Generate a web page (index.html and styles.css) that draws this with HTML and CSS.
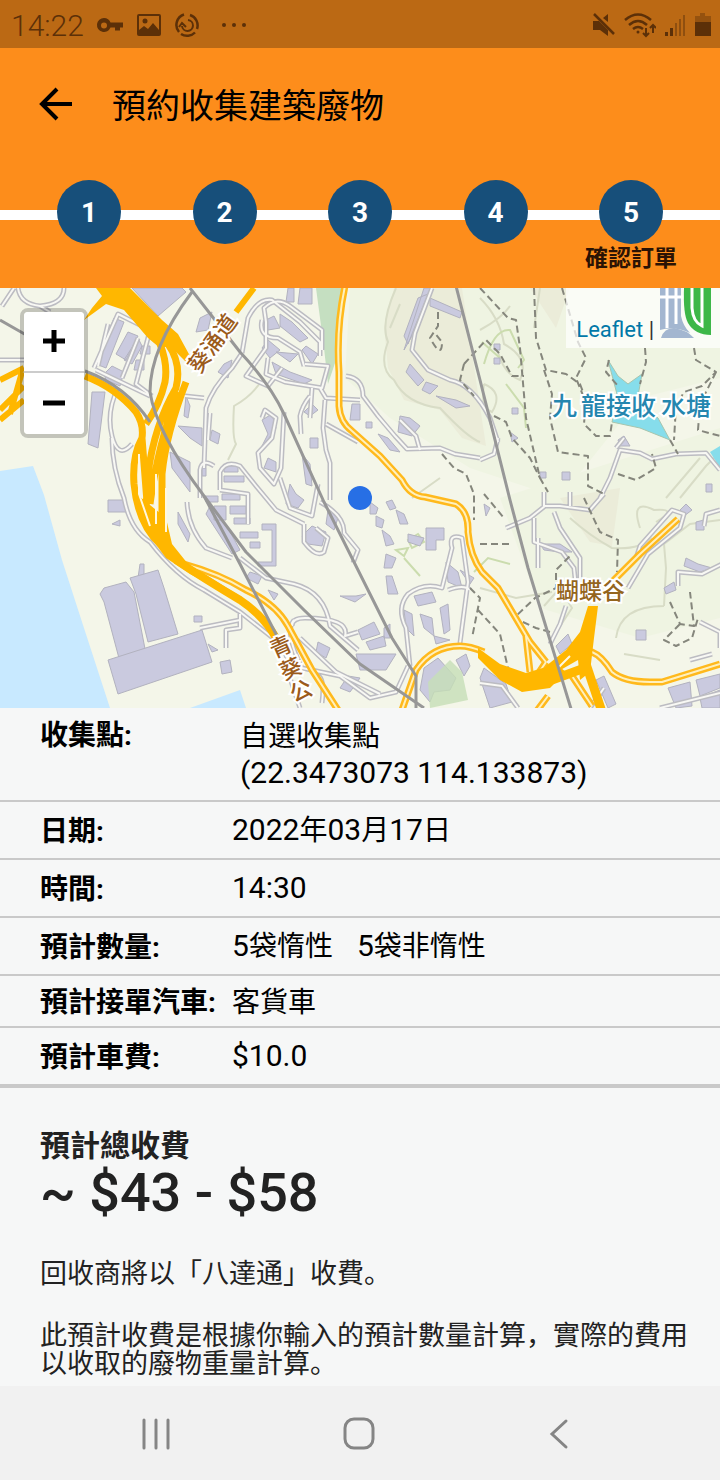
FILE: index.html
```
<!DOCTYPE html>
<html lang="zh">
<head>
  <meta charset="UTF-8">
  <meta name="viewport" content="width=device-width, initial-scale=1.0">
  <title>預約收集建築廢物</title>
  <link rel="stylesheet" href="styles.css">
</head>
<body>
  <!-- Status bar -->
  <div class="status-bar">
    <span class="time">14:22</span>
    <svg width="28" height="28" viewBox="0 0 28 28">
      <path fill="currentColor" fill-rule="evenodd" d="M8 7a7 7 0 1 0 6.500 9.500H19v3h5v-3h3v-5H14.500A7 7 0 0 0 8 7zm0 4.500a3 3 0 1 1 0 6 3 3 0 0 1 0-6z"/>
    </svg>
    <svg width="26" height="26" viewBox="0 0 26 26">
      <rect x="2" y="3" width="22" height="20" rx="1" fill="none" stroke="currentColor" stroke-width="2"/>
      <circle cx="9" cy="9" r="2.500" fill="currentColor"/>
      <path fill="currentColor" d="M3 18l5-4 4 3 5-6 6 7v5H3z"/>
    </svg>
    <svg width="26" height="26" viewBox="0 0 26 26" fill="none" stroke="currentColor" stroke-width="2.500">
      <path d="M10 2.500A11 11 0 0 0 5 20M7 22a11 11 0 0 0 14-1.500M23 17A11 11 0 0 0 16 3"/>
      <path d="M14 8a5.500 5.500 0 1 1-6 6M5 15l3-4 4 4" stroke-width="2"/>
    </svg>
    <svg class="dots" width="28" height="26" viewBox="0 0 28 26" fill="currentColor">
      <circle cx="4" cy="13" r="2"/><circle cx="14" cy="13" r="2"/><circle cx="24" cy="13" r="2"/>
    </svg>
    <div class="status-right">
      <svg width="24" height="26" viewBox="0 0 24 26">
        <path fill="currentColor" d="M1 9h6l9 9v6l-8-6H1z"/>
        <path fill="currentColor" d="M11 6l5-4v8z"/>
        <path stroke="currentColor" stroke-width="2.500" d="M2 2l20 20"/>
      </svg>
      <svg width="32" height="26" viewBox="0 0 32 26" fill="none" stroke="currentColor" stroke-width="2.500">
        <path d="M1 8q13-11 26 0M5 13q9-8 18 0M9 17q5-4 10 0"/>
        <circle cx="14" cy="20" r="1.500" fill="currentColor" stroke="none"/>
        <path stroke-width="2" d="M22 16v8M19 21l3 3 3-3M29 21v-8M26 16l3-3 3 3"/>
      </svg>
      <svg width="22" height="26" viewBox="0 0 22 26" fill="currentColor">
        <path d="M1 20h3v4H1zM6 16h3v8H6z"/>
        <path opacity=".45" d="M11 11h2v13h-2zM15 7h2v17h-2zM19 3h2v21h-2z"/>
      </svg>
      <svg width="18" height="26" viewBox="0 0 18 26" fill="currentColor">
        <path opacity=".4" d="M1 4h5V1h5v3h6v6H1z"/>
        <path d="M1 10h16v14H1z"/>
      </svg>
    </div>
  </div>

  <header class="header">
    <div class="title-row">
      <button class="back" aria-label="返回">
        <svg width="34" height="34" viewBox="0 0 34 34" fill="none" stroke="currentColor" stroke-width="4">
          <path d="M33 17H4M18 2L3 17l15 15"/>
        </svg>
      </button>
      <h1>預約收集建築廢物</h1>
    </div>
    <ol class="steps">
      <li><span class="circle">1</span></li>
      <li><span class="circle">2</span></li>
      <li><span class="circle">3</span></li>
      <li><span class="circle">4</span></li>
      <li aria-current="step"><span class="circle">5</span><span class="step-label">確認訂單</span></li>
    </ol>
  </header>

  <main>
    <div class="map">
      <svg class="map-canvas" viewBox="0 0 720 420" preserveAspectRatio="xMidYMid slice" role="img" aria-label="收集點地圖">
        <defs>
          <g id="streets">
            <path d="M-2 72L24 72M18 0q2 16 22 18q24-2 24-18M2 18L14 0M40 18L50 24"/>
            <path d="M94 80L118 26L150 42L136 96L152 108M108 36L98 78M138 50L122 90M96 82L150 108M118 100Q106 124 112 148Q118 172 132 156M112 150Q112 180 124 210Q130 242 150 254Q176 288 204 302L240 324L278 354L300 420"/>
            <path d="M282 80L268 98L246 88L266 60L266 34L264 20Q276 8 290 18L322 42L322 62"/>
            <path d="M242 65L248 30Q258 10 272 12L300 34L320 54L320 68M262 32Q258 50 278 50L300 64L304 78M268 70L266 86L285 94L322 100L328 78L305 76M320 100L326 110L360 112M325 112L323 140L326 162L330 175L330 212M346 88Q363 90 363 108L378 128L395 148L407 161L440 160L455 166L480 170"/>
            <path d="M310 108Q302 118 300 128L301 146M312 100L310 130M262 130L265 122L276 130L272 150L258 165L260 180L274 196L281 180L284 124M326 136L358 154"/>
            <path d="M242 65L232 80Q212 100 206 120L204 180M204 110L185 108M210 125L208 152M200 210V182Q202 170 214 178M220 202V184Q226 172 240 178L256 198L276 222L304 236M220 202L248 206V236M280 190L290 220L312 228L318 196"/>
            <path d="M187 214Q188 240 206 260L232 270M304 236L304 254Q316 270 324 264L328 250L316 240M320 214Q345 228 344 245L358 262L353 275M240 270L266 290L294 296Q325 304 330 338L358 362M292 338Q292 330 305 330Q350 330 345 348L358 344M294 332Q284 344 302 380L340 388L370 410L396 404L408 378M300 350L336 384L380 406M318 388Q325 390 322 415"/>
            <path d="M410 378L406 340Q396 320 408 306Q424 294 442 300L452 260Q448 245 462 250L468 294L460 355M448 302Q464 296 470 302"/>
            <path d="M432 0L415 45L412 62L428 82L450 92Q472 96 490 130L498 154M400 132L416 148L420 162"/>
            <path d="M480 172L494 166L498 150M600 210L610 190L620 162L640 165L652 171L676 166L706 165L720 182M616 160L624 150"/>
            <path d="M506 240L530 230L545 218L560 218L590 222L604 206M534 230L534 254L562 264L574 280L576 300M554 224L560 240L580 270L580 296M566 318L560 336L550 356M538 250L538 280M544 218L544 204M570 218V204"/>
            <path d="M636 270L640 258L672 222L684 226L680 240L648 266L628 300M704 238L706 226L720 222M678 298L678 284L702 286L722 276M700 334L720 344V360M660 420L720 405M690 372L712 366"/>
            <path d="M240 326L240 340L226 342L226 360M240 332L200 340M480 395L502 398L518 420M590 420L604 400"/>
          </g>
          <g id="roads">
            <path d="M345 -2Q336 40 339 84V118Q340 134 352 143L380 168L402 192Q410 208 425 209L456 216Q469 224 468 244Q470 268 482 284L498 300L530 354L546 374"/>
            <path d="M184 276Q220 286 246 302Q276 316 288 338L312 382L338 422"/>
            <path d="M402 422L416 382Q432 358 460 358Q470 358 484 364"/>
            <path d="M578 364H592Q602 368 612 384Q624 394 650 394H662L720 376"/>
            <path d="M612 294L640 266L678 231M526 348L530 384M548 408L536 424M572 388L592 418M546 374L534 392"/>
          </g>
          <g id="rail">
            <path d="M192 4Q150 60 150 104Q156 144 204 208L246 264L304 322L360 376L424 420"/>
            <path d="M190 0L240 64Q270 96 284 126L324 214L392 350L416 388V422"/>
            <path d="M0 32L28 48M85 83Q126 98 150 134M204 208L240 276L280 354"/>
            <path d="M456 -2L480 92L510 212L528 280L572 424"/>
          </g>
        </defs>

        <!-- land, hills and water -->
        <rect width="720" height="420" fill="#f4f6e9"/>
        <g fill="#eff4e2">
          <path d="M350 0H720V90L640 110L560 210L470 180L390 130L345 90z"/>
          <path d="M500 210L720 140V330L640 350L540 320z"/>
        </g>
        <path fill="#c5dfc1" d="M316 0H346L340 30L336 72L328 96L324 60z"/>
        <g fill="#ebecd9">
          <path d="M394 0L384 38L388 80L404 112L440 122L462 150L486 158L476 92L462 0zM530 0H570L556 40z"/>
          <path d="M560 210L620 200L612 258L590 254z"/>
        </g>
        <g fill="none" stroke="#d8dcc6" stroke-width="2">
          <path d="M396 0Q380 36 388 54Q378 80 394 92Q406 116 440 120Q468 150 480 154M400 16L390 40M570 230Q590 248 612 260Q640 262 652 250M480 300L516 310L552 304M664 318L666 280L664 256L690 236L720 232M664 318Q620 318 616 350M624 366L660 372"/>
          <path d="M480 10Q500 30 504 56Q530 70 520 92Q504 86 498 64M540 0L534 40M480 42Q502 30 510 18M484 96Q504 104 492 124Q480 120 484 96M720 164L706 178L680 210M700 170L666 210M640 240Q630 210 654 222Q680 220 656 234"/>
          <path d="M262 92Q252 108 234 118Q232 150 236 156L228 172M412 210L440 190M544 318L560 300L572 320L555 346"/>
        </g>
        <g fill="none" stroke="#cbdcae" stroke-width="2">
          <path d="M484 76Q494 40 510 42L524 72L518 80M506 96L524 120L526 140M482 54L500 70M396 262L408 260L404 268zM404 270L420 288M408 252L418 246L424 254L412 260zM474 284L488 270L510 276"/>
        </g>
        <path fill="#c8e9ff" d="M0 183L33 178L44 207L62 272L83 337L110 420H0zM190 420L240 402L246 420z"/>
        <path fill="#86ddeb" stroke="#a7c5ae" d="M608 72L618 88L628 96L642 86L638 108L648 122L658 130L670 152L640 140L612 134L618 110z"/>
        <path fill="#86ddeb" d="M710 164L720 158V180z"/>

        <!-- buildings -->
        <g fill="#cacadf" stroke="#b2b2bf" stroke-width="1">
          <path d="M132 0H182L186 4L158 28z"/>
          <path d="M114 30L124 34L106 80L96 76zM128 44L138 48L126 72L116 66zM138 50L142 58L132 76L124 72zM104 86L112 78L124 84L120 98L106 92zM142 58H150V66H140zM136 72H144V82H134z"/>
          <path d="M92 104H105L98 160L88 156zM200 30L212 24L208 42L196 44zM224 76L232 72L228 90L218 84zM186 108L190 118L188 130L184 128zM178 138L202 140V158L190 150zM212 142L220 146L218 156L210 152zM170 164L190 174L190 204L172 180z"/>
          <path d="M108 212L126 212V224H108zM112 236L120 232V238zM178 224L190 246L188 254L178 236zM140 276H144V290H138z"/>
          <path d="M100 306L104 300L126 294L134 304L146 366L120 374L104 314zM130 290L158 282L164 300L178 346L148 354L136 306z"/>
          <path d="M108 372L202 342L212 374L118 406zM208 356L218 362L212 364zM220 374L230 372L232 384L222 386zM194 328H202V334H194z"/>
          <path d="M404 62L424 0H432L412 48zM418 10L428 6L408 56L404 48zM430 10L462 24L460 30L430 18zM410 76L424 92L418 98L406 84zM426 94L438 98L430 106L422 102zM436 108L456 112L470 118L456 120z"/>
          <path d="M262 60L268 52L280 62L270 70zM280 26L292 34L308 50L300 54L280 38zM272 74L290 84L312 92L304 96L276 86zM300 0H312V16H298zM288 0H294V14H286zM276 64L298 66L290 74zM306 58L318 66L312 76L302 62zM262 34L274 28L280 40L268 42z"/>
          <path d="M262 132L272 126L276 140L262 160L258 166L268 146zM310 150H318V160H310zM352 116H360V132H350zM366 134H372V140H366zM400 128L410 130L420 138L412 148L398 144zM378 146L388 150L400 164L390 162zM304 124L312 116L318 122L310 128zM268 170L276 174V184L264 180z"/>
          <path d="M224 178H238V184H224zM224 188H244V194H224zM206 180V188H202V180zM222 206H240V212H222zM206 208H218V214H206zM214 218H226V232H214zM230 218H246V226H230zM234 230H250V236H234zM240 244H258V250H240zM250 254H260V260H250zM262 236H276V278H258V274H272V242H262zM210 218L228 240L240 262L232 266L206 226z"/>
          <path d="M302 166L310 176L312 198L306 196zM290 196L296 206L304 212L298 220L286 216zM302 248L312 238L326 244L322 258L308 256zM250 284L262 288L258 296L246 290zM268 302L278 306L274 312zM328 222L338 230L334 242L326 236z"/>
          <path d="M340 308L355 314L366 306L356 308zM358 342L374 334L380 346L362 352zM366 354L384 348L386 358L370 362zM384 340L390 336V350H384zM356 366H396L386 382H360zM318 354L330 360L326 370L316 364zM348 388L360 390L350 404L340 400z"/>
          <path d="M370 214L378 220L376 226H370zM376 228L384 232L382 240L376 238zM382 242L390 248L394 256L386 258zM386 214L392 212L396 220L390 222zM396 222L404 226L408 236L400 236zM386 266L396 270L392 280H384zM386 288H392L398 306H388zM408 246L424 250L420 258L408 254zM426 240H444V252H436V262H426zM446 274L458 284L462 300L448 294zM460 282L474 290L470 296z"/>
          <path d="M404 322L412 326L414 348L406 340zM414 308L432 304L436 314L418 318zM420 326L432 330L434 348L424 340zM440 320L448 316L450 342L444 346zM434 348L450 352L436 356zM420 402L424 380L438 370L456 390L450 402L434 404L430 414zM456 372L466 366L470 378L464 388z"/>
          <path d="M494 56H500V62H494zM494 70H500V76H494zM512 120H518V126H512zM510 144L518 150L512 154zM540 184H546V190H540zM562 184H570V192H562zM618 152L624 148L630 158H620zM706 196H712V204H706z"/>
          <path d="M556 358L568 346L572 356L560 366zM596 392L604 388L616 416L608 420zM668 400L690 394L692 418L676 420zM696 392L720 386V400L700 408zM700 410L720 402V420H702zM636 342H646V352H636zM686 270L698 276L712 280L700 284L684 278zM664 300L674 294L676 302L666 306zM680 222L686 216L692 222L684 228zM696 234L704 232V242H696z"/>
          <path d="M540 256L560 256L572 264L560 264L544 262zM484 216L490 220L486 228zM484 380L506 396L512 414L490 420L480 390z"/>
        </g>
        <path fill="#c5dfb7" d="M428 394L450 372L462 384L468 412L430 420z" opacity=".8"/>

        <!-- local streets -->
        <use href="#streets" class="street-edge"/>
        <use href="#streets" class="street"/>
        <g class="trail">
          <path d="M480 0L508 30L516 32L520 60L526 130L540 190L548 204M534 0L536 50L546 82L566 86L580 96L586 112L584 136L596 148H610L612 134M562 0L578 54L586 70L576 90L584 110M645 60L646 74L640 96M609 72L606 84L618 98M544 82L552 106L550 130L558 164L588 168L588 198L604 206M694 60L696 72L716 84L702 98L684 104L676 118L674 152M716 84L700 116L698 142L720 148M618 186L636 192L656 180L652 166M670 152L678 166"/>
          <path d="M438 24V38L430 50Q442 72 442 54L434 44M464 76L460 92L474 108M464 76L486 52L500 66L512 88H524M442 166L454 180L466 186L474 206V232M494 128L506 134L512 150L530 170L540 190M484 206L504 230M584 210L600 244L618 252L617 284M550 344L536 340L514 330L535 310L556 300L556 282L570 268M478 322L500 346L508 380L524 390M470 300L480 310L472 350M480 256H512M670 314L680 336L694 338L690 304M680 336L664 352L676 358L692 350L698 330"/>
        </g>

        <!-- main roads and highway -->
        <use href="#roads" class="road"/>
        <use href="#roads" class="road-mid"/>
        <path fill="#ffb700" d="M96 0H130L162 32L178 46L190 68L186 74L170 58L160 60L148 50L124 22L106 16L84 32L92 20L102 8z"/>
        <path fill="#ffb700" d="M134 204L166 230L172 256L188 276L240 308L234 310L190 286L166 270L148 246zM588 318H598L594 350L590 384L580 392L578 372L550 388L546 378L566 362L580 344z"/>
        <path fill="#ffb700" d="M478 360L500 376L526 385L556 376L566 384L550 400L522 404L500 392L478 370z"/>
        <g class="highway">
          <path d="M160 56Q168 76 165 94Q160 116 146 136M168 56Q182 76 176 100Q154 138 148 186L146 220M85 88Q116 100 136 124Q144 136 142 150Q132 168 134 196Q138 236 160 256M142 150L147 214M186 94Q166 146 162 186V240M178 104Q158 156 150 216" stroke-width="7"/>
          <path d="M176 272Q206 292 240 312Q264 328 276 350" stroke-width="8"/>
          <path d="M0 92L24 80M0 122L24 98M0 132L24 112M10 126L22 84M254 0L236 24" stroke-width="6"/>
          <path d="M586 376L602 424" stroke-width="9"/>
          <path d="M552 392L590 378" stroke-width="9"/>
        </g>
        <g class="highway-gap">
          <path d="M139 166V206L150 238M156 186V236M166 200V244M558 380L570 368"/>
        </g>
        <use href="#rail" class="rail"/>

        <!-- place names -->
        <text class="road-name" transform="translate(219 60) rotate(-54)" text-anchor="middle">葵涌道</text>
        <g class="road-name" text-anchor="middle">
          <text transform="translate(284 366) rotate(-24)">青</text>
          <text transform="translate(294 388) rotate(-24)">葵</text>
          <text transform="translate(304 410) rotate(-24)">公</text>
        </g>
        <text class="place-name" x="556" y="311">蝴蝶谷</text>
        <text class="water-name" x="552" y="127">九</text>
        <text class="water-name" x="581" y="127">龍接收</text>
        <text class="water-name" x="661" y="127">水塘</text>
        <circle cx="360" cy="210" r="12" fill="#276fe5"/>
      </svg>

      <div class="zoom-control">
        <button aria-label="放大">
          <svg width="24" height="24" viewBox="0 0 24 24"><path stroke="#000" stroke-width="5" d="M1 11h22M12 0v22"/></svg>
        </button>
        <button aria-label="縮小">
          <svg width="24" height="24" viewBox="0 0 24 24"><path stroke="#000" stroke-width="5" d="M1 11h22"/></svg>
        </button>
      </div>

      <div class="attribution">
        <span><a href="#">Leaflet</a> |</span>
        <svg width="51" height="50" viewBox="0 0 51 50">
          <path fill="#a3b6d0" d="M0 0H21V28Q23 38 30 45Q15 38 0 42z"/>
          <path fill="#a3b6d0" d="M1 50Q4 40 14 40Q27 42 34 50z"/>
          <path fill="none" stroke="#fff" stroke-width="3" d="M7 0V40M16 0V36M0 9H24"/>
          <path fill="#3db748" d="M24 0H51V47Q35 47 28 35Q23 26 24 0z"/>
          <path fill="none" stroke="#fff" stroke-width="3" d="M32 0V20Q33 34 42 38V0"/>
        </svg>
      </div>
    </div>

    <table class="details">
      <tr class="point"><th scope="row">收集點:</th><td>自選收集點<br><span class="num">(22.3473073 114.133873)</span></td></tr>
      <tr><th scope="row">日期:</th><td><span class="num">2022</span>年<span class="num">03</span>月<span class="num">17</span>日</td></tr>
      <tr><th scope="row">時間:</th><td><span class="num">14:30</span></td></tr>
      <tr><th scope="row">預計數量:</th><td><span class="qty"><span class="num">5</span>袋惰性</span><span class="qty"><span class="num">5</span>袋非惰性</span></td></tr>
      <tr class="vehicle"><th scope="row">預計接單汽車:</th><td>客貨車</td></tr>
      <tr class="fare"><th scope="row">預計車費:</th><td><span class="num">$10.0</span></td></tr>
    </table>

    <section class="total">
      <h2>預計總收費</h2>
      <p class="amount">~ $43 - $58</p>
      <p class="note">回收商將以「八達通」收費。</p>
      <p class="note">此預計收費是根據你輸入的預計數量計算，實際的費用以收取的廢物重量計算。</p>
    </section>
  </main>

  <!-- System navigation -->
  <nav class="nav-bar">
    <button aria-label="最近使用">
      <svg width="34" height="34" viewBox="0 0 34 34"><path stroke="currentColor" stroke-width="3" stroke-linecap="round" d="M4 3v28M16 3v28M28 3v28"/></svg>
    </button>
    <button aria-label="主畫面">
      <svg width="34" height="34" viewBox="0 0 34 34"><rect x="2" y="2" width="28" height="29" rx="9" fill="none" stroke="currentColor" stroke-width="3"/></svg>
    </button>
    <button aria-label="上一頁">
      <svg width="34" height="34" viewBox="0 0 34 34"><path fill="none" stroke="currentColor" stroke-width="3" stroke-linecap="round" d="M20 4L6 17l14 13"/></svg>
    </button>
  </nav>
</body>
</html>
```
FILE: styles.css
```
:root {
  --orange: #fd8d1b;
  --orange-dark: #bb6914;
  --blue: #174f7a;
  --line: #c9c9c9;
  --grey-bg: #f6f7f7;
}

* {
  margin: 0;
  padding: 0;
  box-sizing: border-box;
}

body {
  min-height: 100vh;
  display: flex;
  flex-direction: column;
  background: var(--grey-bg);
  color: #000;
  font-family: Roboto, "Noto Sans CJK TC", sans-serif;
  font-size: 28px;
}

button {
  background: none;
  border: none;
  cursor: pointer;
  color: inherit;
}

svg {
  display: block;
}

/* Status bar */
.status-bar {
  height: 48px;
  padding: 2px 8px 0 11px;
  display: flex;
  align-items: center;
  gap: 12px;
  background: var(--orange-dark);
  color: #5c3008;
}

.time {
  font-size: 30px;
  font-weight: 300;
}

.dots {
  margin-left: 8px;
}

.status-right {
  margin-left: auto;
  display: flex;
  gap: 8px;
}

/* Header */
.header {
  height: 240px;
  background: var(--orange);
}

.title-row {
  height: 112px;
  padding: 0 39px;
  display: flex;
  align-items: center;
  gap: 39px;
}

h1 {
  padding-top: 4px;
  font-size: 34px;
  font-weight: 400;
  line-height: 48px;
}

.steps {
  list-style: none;
  padding: 20px 57px 0;
  display: flex;
  justify-content: space-between;
  background: linear-gradient(#fff, #fff) 0 50px / 100% 10px no-repeat;
}

.steps li {
  width: 64px;
  display: flex;
  flex-direction: column;
  align-items: center;
}

.circle {
  width: 64px;
  height: 64px;
  border-radius: 50%;
  display: flex;
  align-items: center;
  justify-content: center;
  background: var(--blue);
  color: #fff;
  font-weight: 700;
}

.step-label {
  font-size: 23px;
  font-weight: 700;
  line-height: 30px;
  white-space: nowrap;
  color: #2b1304;
}

/* Map */
.map {
  position: relative;
  height: 420px;
  overflow: hidden;
}

.map-canvas {
  width: 100%;
  height: 100%;
}

.street-edge,
.street,
.trail,
.road,
.road-mid,
.highway,
.highway-gap,
.rail {
  fill: none;
  stroke-linejoin: round;
}

.street-edge {
  stroke: #bcbcc2;
  stroke-width: 5;
}

.street {
  stroke: #f8f8f4;
  stroke-width: 2;
}

.trail {
  stroke: #85867c;
  stroke-width: 2;
  stroke-dasharray: 7 4;
}

.road {
  stroke: #ffb91c;
  stroke-width: 7;
}

.road-mid {
  stroke: #fff0bd;
  stroke-width: 2;
}

.highway {
  stroke: #ffb700;
}

.highway-gap {
  stroke: #fff8df;
  stroke-width: 2;
}

.rail {
  stroke: #979797;
  stroke-width: 3;
}

.road-name,
.place-name,
.water-name {
  font-family: "Noto Sans CJK TC", sans-serif;
  font-weight: 500;
  stroke: #fff;
  stroke-width: 4;
  paint-order: stroke;
}

.road-name {
  font-size: 22px;
  fill: #9b5b1b;
}

.place-name {
  font-size: 23px;
  fill: #94651d;
}

.water-name {
  font-size: 25px;
  fill: #2586af;
}

.zoom-control {
  position: absolute;
  top: 20px;
  left: 20px;
  border: 4px solid rgba(0, 0, 0, 0.2);
  border-radius: 8px;
  background-clip: padding-box;
}

.zoom-control button {
  width: 60px;
  height: 61px;
  display: flex;
  align-items: center;
  justify-content: center;
  background: #fff;
  border-radius: 0 0 4px 4px;
}

.zoom-control button:first-child {
  border-bottom: 2px solid #ccc;
  border-radius: 4px 4px 0 0;
}

.attribution {
  position: absolute;
  top: 0;
  right: 0;
  height: 60px;
  padding: 0 9px 0 10px;
  display: flex;
  gap: 6px;
  background: rgba(255, 255, 255, 0.7);
  color: #333;
  font-size: 22px;
  line-height: 84px;
}

.attribution a {
  color: #0078a8;
  text-decoration: none;
}

/* Order details */
.details {
  width: 100%;
  border-collapse: collapse;
}

.details tr {
  height: 58px;
  border-bottom: 2px solid var(--line);
}

.details th {
  width: 232px;
  padding: 4px 0 0 40px;
  text-align: left;
  font-weight: 700;
  line-height: 36px;
  white-space: nowrap;
}

.details td {
  line-height: 36px;
}

.details .point {
  height: 93px;
}

.details .point th {
  padding-top: 10px;
  vertical-align: top;
}

.details .point td {
  padding: 11px 0 8px 8px;
}

.details .vehicle {
  height: 52px;
}

.details .vehicle td {
  padding-top: 4px;
}

.details .fare {
  height: 59px;
  border-bottom-width: 4px;
}

.num {
  font-size: 30px;
}

.qty {
  margin-right: 24px;
}

/* Total */
.total {
  padding: 40px 30px 0 40px;
  color: #222;
}

h2 {
  font-size: 30px;
  font-weight: 700;
  line-height: 36px;
}

.amount {
  margin-bottom: 38px;
  font-size: 54px;
  font-weight: 500;
  line-height: 58px;
}

.note {
  margin-bottom: 34px;
  font-family: Roboto, "Noto Sans CJK SC", sans-serif;
  font-size: 27px;
  line-height: 28px;
}

.note:last-child {
  margin-bottom: 8px;
}

/* Navigation bar */
.nav-bar {
  height: 94px;
  margin-top: auto;
  padding: 2px 56px 0;
  display: grid;
  grid-template-columns: repeat(3, 1fr);
  background: #f1f1f1;
  color: #858585;
}

.nav-bar button {
  display: flex;
  align-items: center;
  justify-content: center;
}
```
